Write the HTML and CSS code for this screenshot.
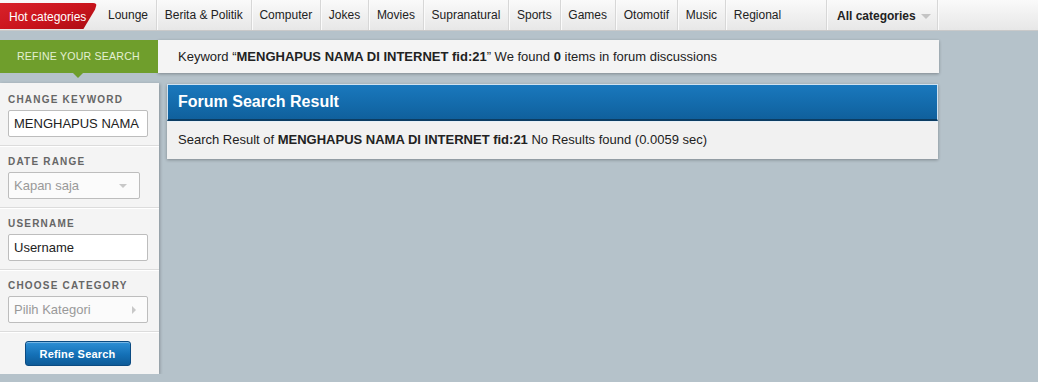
FILE: index.html
```html
<!DOCTYPE html>
<html>
<head>
<meta charset="utf-8">
<title>Forum Search</title>
<link rel="stylesheet" href="styles.css">
</head>
<body>
<nav class="topnav">
  <div class="nav-main">
    <a class="hot">Hot categories</a>
    <a class="nav-item">Lounge</a>
    <a class="nav-item">Berita &amp; Politik</a>
    <a class="nav-item">Computer</a>
    <a class="nav-item">Jokes</a>
    <a class="nav-item">Movies</a>
    <a class="nav-item">Supranatural</a>
    <a class="nav-item">Sports</a>
    <a class="nav-item">Games</a>
    <a class="nav-item">Otomotif</a>
    <a class="nav-item">Music</a>
    <a class="nav-item nav-last">Regional</a>
  </div>
  <a class="nav-all">All categories <span class="caret-down"></span></a>
</nav>

<div class="refine-row">
  <div class="refine-tab">REFINE YOUR SEARCH</div>
  <div class="keyword-bar">Keyword “<b>MENGHAPUS NAMA DI INTERNET fid:21</b>” We found <b>0</b> items in forum discussions</div>
</div>

<div class="content">
  <aside class="sidebar">
    <div class="side-section">
      <div class="side-label">CHANGE KEYWORD</div>
      <div class="field">MENGHAPUS NAMA</div>
    </div>
    <div class="side-section">
      <div class="side-label">DATE RANGE</div>
      <div class="field field-select field-short"><span class="placeholder">Kapan saja</span><span class="tri-down"></span></div>
    </div>
    <div class="side-section">
      <div class="side-label">USERNAME</div>
      <div class="field">Username</div>
    </div>
    <div class="side-section">
      <div class="side-label">CHOOSE CATEGORY</div>
      <div class="field field-select"><span class="placeholder">Pilih Kategori</span><span class="tri-right"></span></div>
    </div>
    <div class="side-button">
      <button class="btn-refine">Refine Search</button>
    </div>
  </aside>

  <section class="result-panel">
    <div class="result-head">Forum Search Result</div>
    <div class="result-body">Search Result of <b>MENGHAPUS NAMA DI INTERNET fid:21</b> No Results found (0.0059 sec)</div>
  </section>
</div>
</body>
</html>
```

FILE: styles.css
```css
* { box-sizing: border-box; }

body {
  margin: 0;
  background: #b5c2ca;
  font-family: "Liberation Sans", Arial, sans-serif;
  color: #222;
}

/* top navigation */
.topnav {
  display: flex;
  align-items: stretch;
  height: 31px;
  background: linear-gradient(#fafafa, #e7e7e7);
  border-bottom: 1px solid #c9c9c9;
  font-size: 12px;
}
.nav-main {
  display: flex;
  align-items: stretch;
  width: 826px;
  flex: none;
}

.hot {
  position: relative;
  isolation: isolate;
  width: 100px;
  flex: none;
  color: #fff;
  line-height: 26px;
  padding: 4px 0 0 9px;
}
.hot::after {
  content: "";
  position: absolute;
  left: 0;
  top: 3px;
  bottom: 1px;
  width: 97px;
  background: linear-gradient(160deg, #d8222a 0%, #c9141c 55%, #a90d14 100%);
  clip-path: polygon(0 0, 100% 0, 98% 25%, 86% 100%, 0 100%);
  border-radius: 0 4px 0 0;
  z-index: -1;
}

.nav-item {
  padding: 1px 7.85px 0;
  line-height: 29px;
  border-right: 1px solid #d7d7d7;
  box-shadow: 1px 0 0 #fbfbfb;
  color: #222;
  white-space: nowrap;
}
.hot + .nav-item { padding-left: 8px; }
.nav-last {
  border-right: none;
  box-shadow: none;
}
.nav-all {
  display: flex;
  align-items: center;
  gap: 5px;
  padding: 2px 9px 0 10px;
  width: 112px;
  flex: none;
  white-space: nowrap;
  font-weight: bold;
  color: #222;
  border-left: 1px solid #d7d7d7;
  border-right: 1px solid #d7d7d7;
  box-shadow: 1px 0 0 #fbfbfb, inset 1px 0 0 #fbfbfb;
}
.caret-down {
  width: 0;
  height: 0;
  margin-top: 1px;
  border-left: 5px solid transparent;
  border-right: 5px solid transparent;
  border-top: 5px solid #c4c4c4;
}

/* refine row */
.refine-row {
  display: flex;
  margin-top: 9px;
  height: 33px;
}
.refine-tab {
  position: relative;
  width: 158px;
  flex: none;
  background: #6f9e2c;
  color: #e4f0d3;
  font-size: 10.6px;
  letter-spacing: 0.2px;
  padding-left: 17px;
  line-height: 33px;
  white-space: nowrap;
}
.refine-tab::after {
  content: "";
  position: absolute;
  left: 73px;
  bottom: -5px;
  border-left: 5px solid transparent;
  border-right: 5px solid transparent;
  border-top: 5px solid #6f9e2c;
}
.keyword-bar {
  width: 781px;
  background: #f4f4f4;
  box-shadow: 0 1px 3px rgba(0, 0, 0, 0.3);
  font-size: 13px;
  line-height: 33px;
  padding-left: 20px;
  color: #222;
}

/* content */
.content {
  display: flex;
  align-items: flex-start;
  gap: 8px;
  margin-top: 10px;
}

.sidebar {
  width: 159px;
  flex: none;
  background: #f4f4f4;
  box-shadow: 1px 1px 3px rgba(0, 0, 0, 0.25);
  padding-top: 1px;
}
.side-section {
  padding: 9px 8px 8px;
  border-bottom: 1px solid #dcdcdc;
  box-shadow: 0 1px 0 #fff;
}
.side-label {
  font-size: 10px;
  font-weight: bold;
  letter-spacing: 1.2px;
  color: #666;
  line-height: 14px;
  margin-bottom: 3px;
}
.field {
  display: flex;
  align-items: center;
  justify-content: space-between;
  width: 140px;
  height: 27px;
  padding: 0 5px;
  background: #fff;
  border: 1px solid #bdbdbd;
  border-radius: 2px;
  font-size: 13px;
  color: #222;
}
.field-short { width: 132px; }
.field-select { background: #fbfbfb; }
.placeholder { color: #999; }
.tri-down {
  margin-right: 7px;
  border-left: 4px solid transparent;
  border-right: 4px solid transparent;
  border-top: 4px solid #c8c8c8;
}
.tri-right {
  margin-right: 6px;
  border-top: 4px solid transparent;
  border-bottom: 4px solid transparent;
  border-left: 4px solid #c8c8c8;
}
.side-button {
  display: flex;
  justify-content: center;
  padding: 9px 0 8px 0;
  margin-left: -4px;
}
.btn-refine {
  width: 106px;
  height: 25px;
  border: 1px solid #0b4b82;
  border-radius: 3px;
  background: linear-gradient(#2e90d6, #1470b6 55%, #0e5b98);
  box-shadow: inset 0 1px 0 rgba(255, 255, 255, 0.35);
  color: #fff;
  font-family: "Liberation Sans", Arial, sans-serif;
  font-size: 11px;
  font-weight: bold;
  letter-spacing: 0.2px;
  padding: 0;
}

.result-panel {
  width: 771px;
  margin-top: 1px;
  box-shadow: 0 1px 3px rgba(0, 0, 0, 0.3);
}
.result-head {
  height: 37px;
  background: linear-gradient(#1a78bd, #136aaa 60%, #10609c);
  border: 1px solid #cfe2f1;
  border-bottom: 2px solid #0c3d63;
  color: #fff;
  font-size: 16px;
  font-weight: bold;
  padding-left: 10px;
  line-height: 33px;
}
.result-body {
  height: 38px;
  background: #f1f1f1;
  border-top: 1px solid #e6f0f8;
  font-size: 13px;
  line-height: 36px;
  padding-left: 11px;
  color: #222;
}
```
